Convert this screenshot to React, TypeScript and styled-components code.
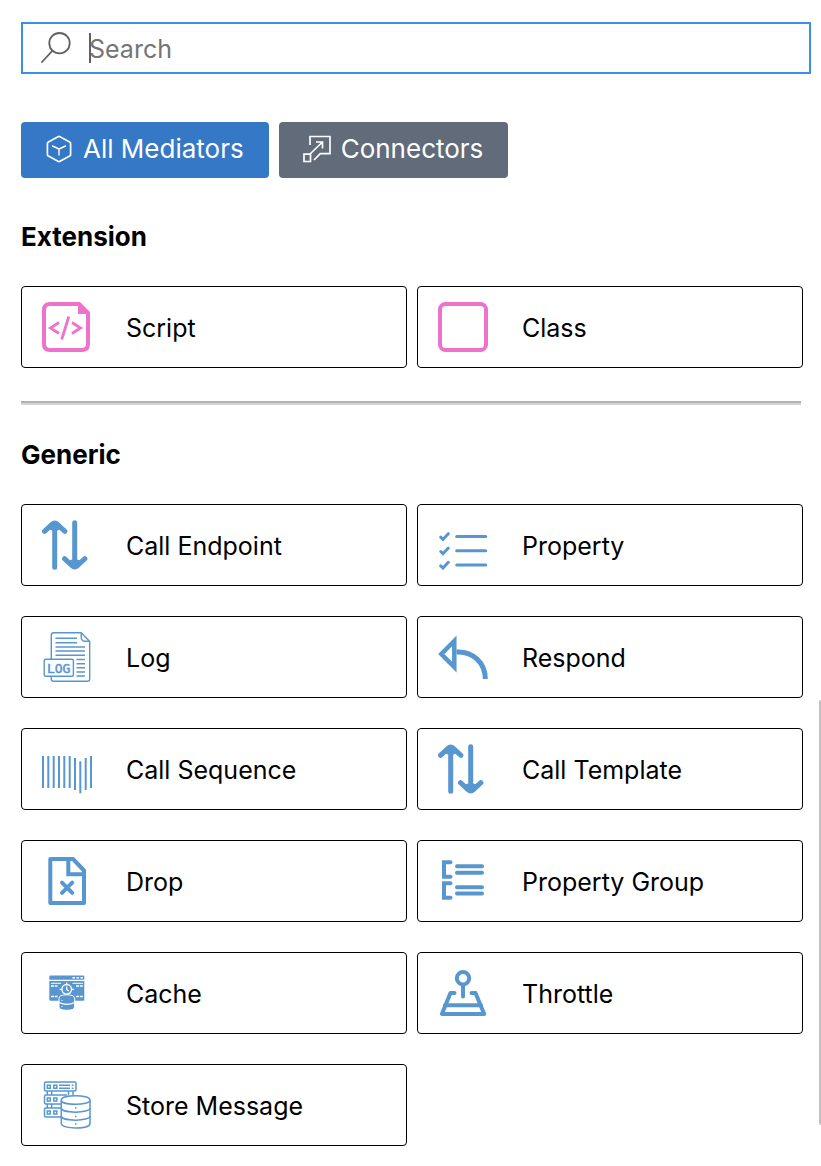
import React from "react";
import styled, { createGlobalStyle } from "styled-components";

const BLUE = "#5896d0";
const PINK = "#ee72cc";

const GlobalStyle = createGlobalStyle`
  *, *::before, *::after { box-sizing: border-box; }
  body {
    margin: 0;
    background: #fff;
    color: #000;
    font-family: Inter, "Liberation Sans", sans-serif;
    font-size: 25px;
    line-height: 32px;
  }
  button, input { font: inherit; }
`;

const Page = styled.main`
  padding: 22px 10px 20px 21px;
`;

const SearchBox = styled.label`
  position: relative;
  display: flex;
  align-items: center;
  gap: 18px;
  height: 52px;
  padding: 0 18px;
  border: 2px solid #3f8ee6;
`;

const SearchInput = styled.input`
  flex: 1;
  min-width: 0;
  height: 34px;
  padding: 2px 0 0;
  border: 0;
  outline: 0;
  background: transparent;
  color: #616161;
  &::placeholder { color: #757575; opacity: 1; }
`;

const Caret = styled.span`
  position: absolute;
  left: 66px;
  top: 9px;
  width: 2px;
  height: 30px;
  background: #616161;
`;

const Tabs = styled.div`
  display: flex;
  flex-wrap: wrap;
  gap: 10px;
  margin-top: 48px;
`;

const TabButton = styled.button<{ $active?: boolean }>`
  display: flex;
  align-items: center;
  gap: 10px;
  height: 56px;
  padding: 0 25px 2px 24px;
  border: 0;
  border-radius: 4px;
  background: ${(p) => (p.$active ? "#3478c6" : "#616b7a")};
  color: #fff;
  font-size: 26px;
  cursor: pointer;
`;

const Section = styled.section`
  padding-right: 8px;
`;

const Heading = styled.h2`
  margin: 34px 0 33px;
  font-size: 26px;
  font-weight: 700;
  line-height: 32px;
`;

const Sections = styled.div`
  padding-top: 9px;
`;

const Grid = styled.div`
  display: grid;
  grid-template-columns: 1fr 1fr;
  gap: 30px 10px;
`;

const Card = styled.button`
  display: flex;
  align-items: center;
  gap: 34px;
  height: 82px;
  padding: 0 20px;
  border: 1px solid #000;
  border-radius: 4px;
  background: #fff;
  color: #000;
  text-align: left;
  cursor: pointer;
`;

const CardLabel = styled.span`
  padding-top: 2px;
`;

const Divider = styled.hr`
  height: 4px;
  margin: 33px 10px 0 0;
  border: 0;
  border-top: 2px solid #b2b2b2;
  background: #d4d4d4;
`;

const ScrollThumb = styled.div`
  position: fixed;
  right: 0;
  top: 60%;
  width: 2px;
  height: 425px;
  border-radius: 2px 0 0 2px;
  background: #c1c1c1;
`;

const Svg = styled.svg`
  flex: none;
  display: block;
`;

const Icon = ({ color = BLUE, children }: { color?: string; children: React.ReactNode }) => (
  <Svg width="50" height="50" viewBox="0 0 50 50" fill="none" stroke={color} aria-hidden="true">
    {children}
  </Svg>
);

const SearchIcon = () => (
  <Svg width="30" height="32" viewBox="0 0 30 32" fill="none" stroke="#616161" strokeWidth="1.8" strokeLinecap="round" aria-hidden="true">
    <circle cx="18.5" cy="11.2" r="10.2" />
    <path d="M11.3 18.8L1 30" />
  </Svg>
);

const CubeIcon = () => (
  <Svg width="28" height="28" viewBox="0 0 28 28" fill="none" stroke="#fff" strokeWidth="1.7" strokeLinejoin="round" strokeLinecap="round" aria-hidden="true">
    <path d="M13 1.7q1-.6 2 0l9.600 5.200q1 .6 1 1.700v10.800q0 1.100-1 1.700L15 26.300q-1 .6-2 0l-9.600-5.200q-1-.6-1-1.700V8.600q0-1.100 1-1.700z" />
    <path d="M7.500 11l6.500 3 6.500-3M14 14v6" strokeWidth="1.400" />
  </Svg>
);

const ScaleIcon = () => (
  <Svg width="28" height="28" viewBox="0 0 28 28" fill="none" stroke="#fff" strokeWidth="1.7" aria-hidden="true">
    <path d="M7 10V1.500h20v17.200H17.300L11 25" />
    <path d="M7 19L19.500 7M13 7h6.500v6.500" />
    <path d="M1 19.200h6.500v7.300H1z" />
  </Svg>
);

const ScriptIcon = () => (
  <Icon color={PINK}>
    <path d="M37 2H8Q2 2 2 8v34q0 6 6 6h32q6 0 6-6V12" strokeWidth="4" />
    <path d="M36 0h2l10 10v2H36z" fill={PINK} stroke="none" />
    <path d="M17 20.500L8.500 26l8.500 5.500M30 20.500l8.500 5.500-8.500 5.500M26.800 14.500L19.700 37.500" strokeWidth="2.800" />
  </Icon>
);

const ClassIcon = () => (
  <Icon color={PINK}>
    <rect x="2" y="2" width="46" height="46" rx="5.500" strokeWidth="4" />
  </Icon>
);

const ArrowsIcon = () => (
  <Icon>
    <g strokeWidth="5" strokeLinecap="round" strokeLinejoin="round">
      <path d="M12.700 3v44.300M2.500 11.300l7.500-7q2.700-2.500 5.400 0l7.500 7" />
      <path d="M32.700 2.700V47M22.500 38.700l7.500 7q2.700 2.500 5.400 0l7.500-7" />
    </g>
    <path d="M6 9l6.700-6 6.700 6-4 1.500h-5.400zM26 41l6.700 6 6.700-6-4-1.500h-5.400z" fill={BLUE} stroke="none" />
  </Icon>
);

const PropertyIcon = () => (
  <Icon>
    {[0, 14.3, 28.6].map((y) => (
      <g key={y} transform={`translate(0 ${y})`} strokeLinecap="round">
        <path d="M18.700 16.500h29" strokeWidth="3" />
        <path d="M2.700 17.200l2.300 2.200 5.300-5.700" strokeWidth="3" />
      </g>
    ))}
  </Icon>
);

const LogText = styled.text`
  font-family: "DejaVu Sans Mono", monospace;
  font-size: 13px;
`;

const LogIcon = () => (
  <Icon>
    <g strokeWidth="1.400" strokeLinejoin="round">
      <path d="M9.300 27V3q0-2.300 2.300-2.300h27.600l8.500 8.800V47q0 2.300-2.300 2.300H11.600Q9.300 49.300 9.300 47v-2.500" />
      <path d="M39.200.7v4q0 4.600 4.500 4.600h4" />
      <rect x="2.200" y="27.200" width="29.200" height="17" rx="1.500" />
    </g>
    <path d="M13.500 6.300H35M13.500 10.700H35M13.500 14.900h29.500M13.500 19.100h29.500M13.500 23.300h29.500M34.500 27.500h8.500M34.500 31.700h8.500M34.500 35.800h8.500M34.500 39.900h8.500M34.500 44h8.500" strokeWidth="1.500" />
    <LogText x="16.700" y="40.500" textAnchor="middle" fill={BLUE} strokeWidth="0.500">LOG</LogText>
  </Icon>
);

const RespondIcon = () => (
  <Icon>
    <path d="M3.300 22L16.300 9v26z" strokeWidth="4.500" />
    <path d="M18.500 20C35 19 47.300 31 47.300 47" strokeWidth="5" />
  </Icon>
);

const SequenceIcon = () => (
  <Icon>
    <path
      d="M1 12v32M6.300 12v32M11.700 12v32M17 12v32M22.300 12v32M27.700 12v32M33 14v32M38.300 17.300v32M43.700 14v32M49 12v32"
      strokeWidth="2"
    />
  </Icon>
);

const DropIcon = () => (
  <Icon>
    <g strokeWidth="4" strokeLinejoin="round">
      <path d="M8.300 3h22.700l11 11.500V47H8.300z" />
      <path d="M26.300 3v15.200H42" strokeLinejoin="miter" />
      <path d="M20 26.700l10.200 10.200M30.200 26.700L20 36.900" strokeLinecap="round" />
    </g>
  </Icon>
);

const GroupIcon = () => (
  <Icon>
    <g strokeWidth="4" strokeLinecap="round">
      <path d="M12.500 6.200H6v14.500h6.500M12.500 27.300H6v14.400h6.500" />
      <path d="M19 10.300h25M19 16.700h25M19 31.300h25M19 37.500h25" />
    </g>
  </Icon>
);

const CacheIcon = () => (
  <Icon>
    <path d="M8.300 7.500h33q1 0 1 1v3.300h-35V8.500q0-1 1-1zM7.300 13h35v18.700q0 1-1 1h-33q-1 0-1-1z" fill={BLUE} stroke="none" />
    <g stroke="#fff">
      <path d="M30.500 9.800H41" strokeWidth="1.400" strokeDasharray="2.500 1.500" />
      <path d="M9 15.300h10M30.500 15.300H41" strokeWidth="1" />
      <path d="M9 18h6.500M34 18h7M9 28.500h6.500M34 28.500h7" strokeWidth="1.400" strokeDasharray="3 .8" />
      <circle cx="24.700" cy="21.300" r="4.800" strokeWidth="1.400" />
      <path d="M24.700 18.500v3l2 1.500M24.700 14.500v2M17.500 21.300h2.300M29.700 21.300H32" strokeWidth="1.200" />
      <path d="M17 30.300q0-3.500 7.800-3.500t7.800 3.500v8.500q0 3.500-7.800 3.500T17 38.800z" fill={BLUE} strokeWidth="1" />
      <path d="M17 34.500q7.800 3.800 15.600 0" strokeWidth="1.300" />
      <path d="M19.500 32.500h1M19.500 38.500h1" strokeWidth="1" />
    </g>
  </Icon>
);

const ThrottleIcon = () => (
  <Icon>
    <g strokeWidth="4" strokeLinecap="round" strokeLinejoin="round">
      <circle cx="25" cy="10.300" r="6.200" />
      <path d="M25 17v11.500M16.500 24.900h-4L3.900 46h42.300l-8.700-21.100h-4" />
      <path d="M7 37.200h36" />
    </g>
  </Icon>
);

const StoreIcon = () => (
  <Icon>
    <g strokeWidth="1.500">
      <path d="M4 2h28.500q1.500 0 1.500 1.500v6q0 1.500-1.500 1.500H4q-1.500 0-1.500-1.500v-6Q2.500 2 4 2z" />
      <path d="M19 24H4q-1.500 0-1.500-1.500v-6Q2.500 15 4 15h21M19 37H4q-1.500 0-1.500-1.500v-6Q2.500 28 4 28h15" />
      <path d="M5.300 11v4M9.700 11v4M26.500 11v4M31 11v4M5.300 24v4M9.700 24v4" />
      <path d="M5.300 5.200h3v3h-3zM11.800 5.200h3v3h-3zM5.300 18h3v3h-3zM11.800 18h3v3h-3zM5.300 31h3v3h-3zM11.800 31h3v3h-3z" />
      <path d="M17 5.200h11M17 8.200h11M29.700 5.200h1.800M29.700 8.200h1.800" />
      <path d="M19.300 20.200c0-6 28.700-6 28.700 0v23.300c0 6-28.700 6-28.700 0z" fill="#fff" />
      <path d="M19.300 20.200c0 5.500 28.700 5.500 28.700 0M19.300 28c0 5.500 28.700 5.500 28.700 0M19.300 36c0 5.500 28.700 5.500 28.700 0" />
      <path d="M33 28h1.500M33 36.500h1.500M33 44h1.500" />
    </g>
  </Icon>
);

type Item = { name: string; icon: React.ComponentType };

const sections: { title: string; items: Item[] }[] = [
  {
    title: "Extension",
    items: [
      { name: "Script", icon: ScriptIcon },
      { name: "Class", icon: ClassIcon },
    ],
  },
  {
    title: "Generic",
    items: [
      { name: "Call Endpoint", icon: ArrowsIcon },
      { name: "Property", icon: PropertyIcon },
      { name: "Log", icon: LogIcon },
      { name: "Respond", icon: RespondIcon },
      { name: "Call Sequence", icon: SequenceIcon },
      { name: "Call Template", icon: ArrowsIcon },
      { name: "Drop", icon: DropIcon },
      { name: "Property Group", icon: GroupIcon },
      { name: "Cache", icon: CacheIcon },
      { name: "Throttle", icon: ThrottleIcon },
      { name: "Store Message", icon: StoreIcon },
    ],
  },
];

export default function App() {
  return (
    <>
      <GlobalStyle />
      <Page>
        <SearchBox>
          <SearchIcon />
          <SearchInput type="text" placeholder="Search" aria-label="Search" />
          <Caret />
        </SearchBox>
        <Tabs>
          <TabButton type="button" $active>
            <CubeIcon />
            All Mediators
          </TabButton>
          <TabButton type="button">
            <ScaleIcon />
            Connectors
          </TabButton>
        </Tabs>
        <Sections>
          {sections.map(({ title, items }, index) => (
            <React.Fragment key={title}>
              {index > 0 && <Divider />}
              <Section>
                <Heading>{title}</Heading>
                <Grid>
                  {items.map(({ name, icon: ItemIcon }) => (
                    <Card type="button" key={name}>
                      <ItemIcon />
                      <CardLabel>{name}</CardLabel>
                    </Card>
                  ))}
                </Grid>
              </Section>
            </React.Fragment>
          ))}
        </Sections>
      </Page>
      <ScrollThumb />
    </>
  );
}
